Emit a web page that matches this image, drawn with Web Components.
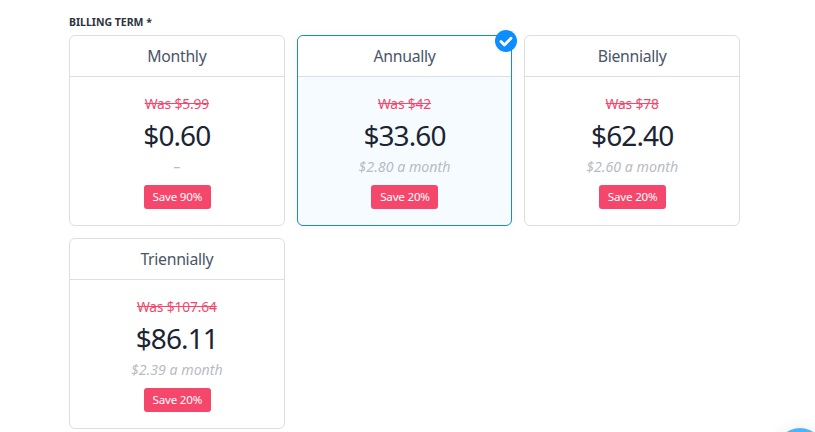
<!DOCTYPE html>
<html lang="en">
<head>
    <meta charset="UTF-8">
    <title>Billing term</title>
    <style>
        html, body { margin: 0; height: 100%; overflow: hidden; background: #fff; }
    </style>
</head>
<body>
    <billing-page>
        <term-card term="Monthly" was="Was $5.99" price="$0.60" note="–" save="Save 90%"></term-card>
        <term-card term="Annually" was="Was $42" price="$33.60" note="$2.80 a month" save="Save 20%" selected></term-card>
        <term-card term="Biennially" was="Was $78" price="$62.40" note="$2.60 a month" save="Save 20%"></term-card>
        <term-card term="Triennially" was="Was $107.64" price="$86.11" note="$2.39 a month" save="Save 20%"></term-card>
    </billing-page>

    <script>
        /**
         * One selectable billing term.
         */
        class TermCard extends HTMLElement {
            constructor() {
                super();
                this.attachShadow({ mode: 'open' });
            }

            connectedCallback() {
                const get = (name) => this.getAttribute(name) || '';
                this.shadowRoot.innerHTML = `
                    <style>
                        :host {
                            display: flex;
                            flex-direction: column;
                            position: relative;
                            box-sizing: border-box;
                            height: 191px;
                            border: 1px solid #dddee0;
                            border-radius: 6px;
                            background: #fff;
                            text-align: center;
                        }
                        :host([selected]) {
                            border-color: #1b87e0;
                            background: #f6fbff;
                            box-shadow: 0 0 8px rgba(0, 0, 0, 0.05);
                        }
                        .head {
                            height: 40px;
                            line-height: 40px;
                            border-bottom: 1px solid #dddee0;
                            border-radius: 6px 6px 0 0;
                            background: #fff;
                            font-size: 15.8px;
                            letter-spacing: -0.3px;
                            color: #4a5568;
                        }
                        .body {
                            display: flex;
                            flex-direction: column;
                            align-items: center;
                            padding-top: 18px;
                        }
                        .was {
                            height: 18px;
                            line-height: 18px;
                            font-size: 13.8px;
                            letter-spacing: -0.15px;
                            color: #f4476b;
                            text-decoration: line-through;
                        }
                        .price {
                            height: 40px;
                            line-height: 40px;
                            margin-top: 2px;
                            font-size: 28px;
                            letter-spacing: -0.9px;
                            color: #1a2433;
                        }
                        .note {
                            height: 20px;
                            line-height: 20px;
                            margin-top: 2px;
                            font-size: 14.2px;
                            font-style: italic;
                            color: #b8bcc2;
                        }
                        .save {
                            margin: 8px 0 0 1px;
                            width: 67px;
                            height: 24px;
                            line-height: 24px;
                            border-radius: 3px;
                            background: #f4476b;
                            font-size: 11.6px;
                            letter-spacing: -0.2px;
                            color: #fff;
                        }
                        .tick {
                            display: none;
                            position: absolute;
                            top: -6px;
                            right: -6px;
                            width: 22px;
                            height: 22px;
                        }
                        :host([selected]) .tick { display: block; }
                    </style>
                    <div class="head">${get('term')}</div>
                    <div class="body">
                        <div class="was">${get('was')}</div>
                        <div class="price">${get('price')}</div>
                        <div class="note">${get('note')}</div>
                        <div class="save">${get('save')}</div>
                    </div>
                    <svg class="tick" viewBox="0 0 22 22">
                        <circle cx="11" cy="11" r="11" fill="#0d8eff"/>
                        <path d="M6 11.5l3.4 3.4L16 8.2" fill="none" stroke="#fff" stroke-width="2.8" stroke-linecap="round" stroke-linejoin="round"/>
                    </svg>
                `;
            }
        }

        customElements.define('term-card', TermCard);

        /**
         * Page section: label, grid of cards and the floating button.
         */
        class BillingPage extends HTMLElement {
            constructor() {
                super();
                this.attachShadow({ mode: 'open' });
                this.shadowRoot.innerHTML = `
                    <style>
                        :host {
                            display: block;
                            box-sizing: border-box;
                            height: 432px;
                            padding: 14px 75px 0 69px;
                            font-family: "Noto Sans", "Open Sans", sans-serif;
                        }
                        .label {
                            height: 16px;
                            line-height: 16px;
                            margin-bottom: 5px;
                            font-size: 10.5px;
                            font-weight: 700;
                            color: #2d3340;
                        }
                        .grid {
                            display: grid;
                            grid-template-columns: repeat(3, 1fr);
                            gap: 12px;
                        }
                        .fab {
                            position: fixed;
                            left: 775px;
                            top: 428px;
                            width: 50px;
                            height: 50px;
                            border-radius: 50%;
                            background: #4db5f5;
                            box-shadow: 0 0 16px rgba(0, 0, 0, 0.08);
                        }
                    </style>
                    <div class="label">BILLING TERM *</div>
                    <div class="grid"><slot></slot></div>
                    <div class="fab"></div>
                `;
            }
        }

        customElements.define('billing-page', BillingPage);
    </script>
</body>
</html>
